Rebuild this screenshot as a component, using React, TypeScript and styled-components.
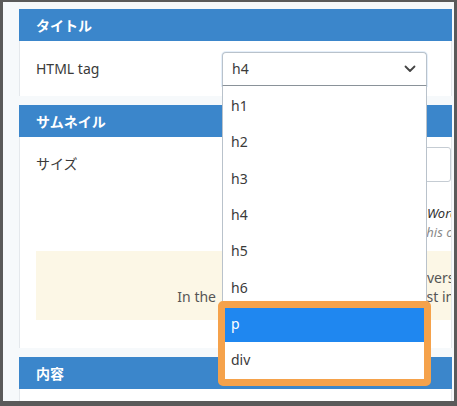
import React from 'react'
import styled, {createGlobalStyle} from 'styled-components'

const GlobalStyle = createGlobalStyle`
  html, body {
    margin: 0;
    padding: 0;
    background: #5a5a5a;
  }
  * {
    box-sizing: border-box;
  }
`;

const Frame = styled.div`
  width: 457px;
  height: 406px;
  padding: 2px 3px 5px 3px;
  background: #5a5a5a;
`;

const Page = styled.div`
  height: 100%;
  overflow: hidden;
  background: #f6f9fb;
  padding: 7px 0 0 16px;
  font-family: "Noto Sans", "Noto Sans CJK JP", sans-serif;
  font-size: 14px;
  color: #3a3a3a;
`;

const Panel = styled.div`
  width: 433px;
  display: flex;
  flex-direction: column;
  gap: 9px;
`;

const Section = styled.section`
  display: flex;
  flex-direction: column;
`;

const SectionHeader = styled.h3`
  margin: 0;
  height: 32px;
  display: flex;
  align-items: center;
  padding-left: 17px;
  background: #3b86cb;
  color: #fff;
  font-family: "Noto Sans CJK JP", sans-serif;
  font-size: 14px;
  font-weight: 700;
`;

const SectionBody = styled.div<{ $height?: number }>`
  background: #fff;
  border-left: 1px solid #e4e8ec;
  border-right: 1px solid #e4e8ec;
  height: ${p => (p.$height ? `${p.$height}px` : 'auto')};
`;

const FieldRow = styled.div<{ $height: number; $align?: string }>`
  display: grid;
  grid-template-columns: 186px 1fr;
  align-items: ${p => p.$align || 'center'};
  height: ${p => p.$height}px;
  padding-left: 16px;
`;

const Label = styled.div<{ $top?: number }>`
  font-size: 14px;
  color: #3a3a3a;
  padding-top: ${p => p.$top || 0}px;
`;

const SelectWrap = styled.div`
  position: relative;
  width: 205px;
  z-index: 5;
`;

const SelectBox = styled.div`
  height: 34px;
  display: flex;
  align-items: center;
  justify-content: space-between;
  padding: 0 10px 0 9px;
  background: #fff;
  border: 1px solid #b9c2cb;
  border-bottom-color: #8a9299;
  border-radius: 4px 4px 0 0;
  box-shadow: 0 0 0 1px rgba(180, 210, 240, 0.35);
`;

const OptionList = styled.ul`
  position: absolute;
  top: 100%;
  left: 0;
  width: 205px;
  margin: 0;
  padding: 2px 0 2px;
  list-style: none;
  background: #fff;
  border: 1px solid #b9c2cb;
  border-top: none;
`;

const Option = styled.li<{ $selected?: boolean }>`
  height: 36.3px;
  display: flex;
  align-items: center;
  padding-left: 8px;
  background: ${p => (p.$selected ? '#1f87f0' : '#fff')};
  color: ${p => (p.$selected ? '#fff' : '#3a3a3a')};
`;

const Highlight = styled.div`
  position: absolute;
  left: -4px;
  top: 249px;
  width: 213px;
  height: 85px;
  border: 7px solid #f5a24b;
  border-radius: 5px;
  pointer-events: none;
`;

const TextInput = styled.div`
  height: 35px;
  margin-top: 10px;
  background: #fff;
  border: 1px solid #c5ccd3;
  border-radius: 3px;
`;

const Description = styled.div`
  padding-left: 16px;
  margin-top: 9px;
`;

const DescLine = styled.div<{ $indent: number; $muted?: boolean }>`
  height: 19px;
  line-height: 19px;
  padding-left: ${p => p.$indent}px;
  font-size: 13px;
  font-style: italic;
  white-space: nowrap;
  overflow: hidden;
  color: ${p => (p.$muted ? '#8a8a8a' : '#333')};
`;

const Notice = styled.div`
  margin: 9px 0 0 16px;
  height: 69px;
  padding-top: 17px;
  background: #fcf7e6;
  color: #555;
`;

const NoticeLine = styled.div<{ $rightStart: number }>`
  display: grid;
  grid-template-columns: 180px ${p => p.$rightStart}px 1fr;
  height: 19px;
  line-height: 19px;
  white-space: nowrap;
  overflow: hidden;
`;

const NoticeLeft = styled.span`
  text-align: right;
`;

const NoticeRight = styled.span`
  grid-column: 3;
`;

const Chevron = () => (
  <svg width="12" height="8" viewBox="0 0 12 8">
    <path d="M1.5 1.5 L6 6 L10.5 1.5" fill="none" stroke="#444" strokeWidth="1.8"
          strokeLinecap="round" strokeLinejoin="round"/>
  </svg>
);

const options = ['h1', 'h2', 'h3', 'h4', 'h5', 'h6', 'p', 'div'];

export default function App() {
  return (
    <>
      <GlobalStyle/>
      <Frame>
        <Page>
          <Panel>
            <Section>
              <SectionHeader>タイトル</SectionHeader>
              <SectionBody>
                <FieldRow $height={55}>
                  <Label>HTML tag</Label>
                  <SelectWrap>
                    <SelectBox>
                      <span>h4</span>
                      <Chevron/>
                    </SelectBox>
                    <OptionList>
                      {options.map(o => (
                        <Option key={o} $selected={o === 'p'}>{o}</Option>
                      ))}
                    </OptionList>
                    <Highlight/>
                  </SelectWrap>
                </FieldRow>
              </SectionBody>
            </Section>

            <Section>
              <SectionHeader>サムネイル</SectionHeader>
              <SectionBody $height={211}>
                <FieldRow $height={58} $align="start">
                  <Label $top={16}>サイズ</Label>
                  <TextInput/>
                </FieldRow>
                <Description>
                  <DescLine $indent={391}>WordPress の設定サイズ</DescLine>
                  <DescLine $indent={386} $muted>this option is optional</DescLine>
                </Description>
                <Notice>
                  <NoticeLine $rightStart={211}>
                    <NoticeLeft/>
                    <NoticeRight>versions of WordPress</NoticeRight>
                  </NoticeLine>
                  <NoticeLine $rightStart={189}>
                    <NoticeLeft>In the</NoticeLeft>
                    <NoticeRight>most important</NoticeRight>
                  </NoticeLine>
                </Notice>
              </SectionBody>
            </Section>

            <Section>
              <SectionHeader>内容</SectionHeader>
              <SectionBody $height={20}/>
            </Section>
          </Panel>
        </Page>
      </Frame>
    </>
  );
}
